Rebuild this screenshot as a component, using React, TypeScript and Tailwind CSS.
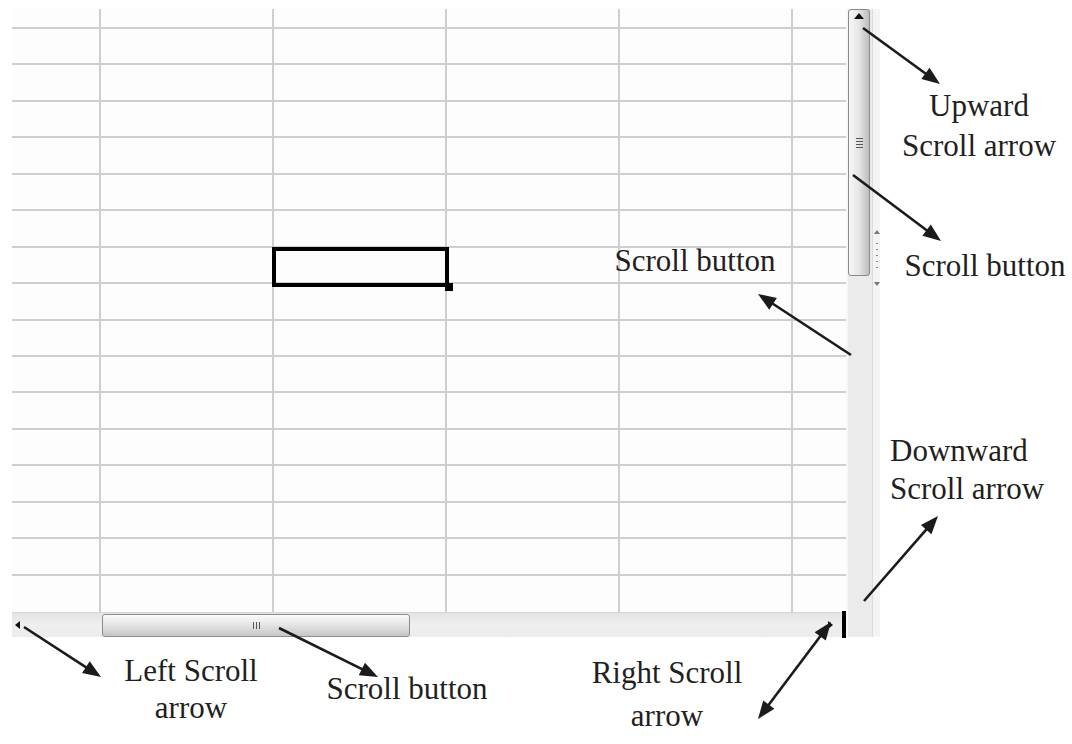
import React from "react";

type Arrow = { x1: number; y1: number; x2: number; y2: number; both?: boolean };

const arrows: Arrow[] = [
  { x1: 863, y1: 28, x2: 940, y2: 84 },
  { x1: 853, y1: 175, x2: 941, y2: 241 },
  { x1: 851, y1: 355, x2: 758, y2: 294 },
  { x1: 864, y1: 601, x2: 938, y2: 516 },
  { x1: 24, y1: 627, x2: 101, y2: 677 },
  { x1: 279, y1: 628, x2: 378, y2: 677 },
  { x1: 831, y1: 622, x2: 758, y2: 719, both: true },
];

const L = 18;
const W = 7;

function head(tx: number, ty: number, fx: number, fy: number) {
  const dx = tx - fx;
  const dy = ty - fy;
  const len = Math.hypot(dx, dy);
  const ux = dx / len;
  const uy = dy / len;
  const bx = tx - ux * L;
  const by = ty - uy * L;
  const nx = -uy;
  const ny = ux;
  return {
    pts: `${tx},${ty} ${bx + nx * W},${by + ny * W} ${bx - nx * W},${by - ny * W}`,
    bx: tx - ux * (L - 3),
    by: ty - uy * (L - 3),
  };
}

function ArrowsLayer() {
  return (
    <svg className="absolute inset-0 pointer-events-none" width={1072} height={744}>
      {arrows.map((a, i) => {
        const h2 = head(a.x2, a.y2, a.x1, a.y1);
        const h1 = a.both ? head(a.x1, a.y1, a.x2, a.y2) : null;
        return (
          <g key={i} fill="#1c1a1b" stroke="#1c1a1b">
            <line
              x1={h1 ? h1.bx : a.x1}
              y1={h1 ? h1.by : a.y1}
              x2={h2.bx}
              y2={h2.by}
              strokeWidth={2.6}
            />
            <polygon points={h2.pts} stroke="none" />
            {h1 && <polygon points={h1.pts} stroke="none" />}
          </g>
        );
      })}
    </svg>
  );
}

const colWidths = ["w-[89px]", "w-[173px]", "w-[173px]", "w-[173px]", "w-[173px]", "w-[53px]"];

function Grid() {
  const rows = Array.from({ length: 17 });
  return (
    <div className="grid grid-rows-[20px_repeat(16,1fr)] h-[603px] w-[834px] bg-[#fdfdfd]">
      {rows.map((_, r) => (
        <div key={r} className="flex">
          {colWidths.map((w, c) => (
            <div
              key={c}
              className={`${w} shrink-0 ${c < 5 ? "border-r-2" : ""} ${r < 16 ? "border-b-2" : ""} border-[#cfcfcf]`}
            />
          ))}
        </div>
      ))}
    </div>
  );
}

function HScroll() {
  return (
    <div className="relative h-[25px] w-[834px] bg-gradient-to-b from-[#e4e4e4] via-[#efefef] to-[#ececec] border-t border-[#d6d6d6] flex items-center">
      <div className="w-[90px] h-full flex items-center pl-[3px]">
        <svg width="6" height="8">
          <polygon points="0,4 5,0 5,8" fill="#111" />
        </svg>
      </div>
      <div className="w-[308px] h-[23px] rounded-[3px] border border-[#8e8e8e] bg-gradient-to-b from-[#fbfbfb] via-[#e3e3e3] to-[#c6c6c6] flex items-center justify-center">
        <div className="flex gap-[2px] h-[7px]">
          <div className="w-[1px] h-full bg-[#555]" />
          <div className="w-[1px] h-full bg-[#555]" />
          <div className="w-[1px] h-full bg-[#555]" />
        </div>
      </div>
      <div className="flex-1" />
      <div className="w-[8px] flex items-center">
        <svg width="6" height="8">
          <polygon points="6,4 1,0 1,8" fill="#111" />
        </svg>
      </div>
      <div className="w-[7px]" />
      <div className="w-[4px] h-[27px] bg-black -mt-[2px]" />
    </div>
  );
}

function VScroll() {
  return (
    <div className="w-[24px] h-[628px] flex flex-col bg-[#ebebeb]">
      <div className="h-[267px] w-[22px] rounded-[3px] border border-[#8a8a8a] bg-gradient-to-r from-[#f6f6f6] via-[#e6e6e6] to-[#bdbdbd] flex flex-col items-center">
        <svg width="10" height="6" className="mt-[3px]">
          <polygon points="5,0 10,6 0,6" fill="#111" />
        </svg>
        <div className="flex flex-col gap-[2px] w-[7px] mt-[119px]">
          <div className="h-[1px] w-full bg-[#555]" />
          <div className="h-[1px] w-full bg-[#555]" />
          <div className="h-[1px] w-full bg-[#555]" />
          <div className="h-[1px] w-full bg-[#555]" />
        </div>
      </div>
      <div className="flex-1" />
    </div>
  );
}

function SplitStrip() {
  return (
    <div className="w-[8px] h-[628px] bg-[#f4f4f4] border-l border-[#dcdcdc] flex flex-col items-center">
      <svg width="6" height="60" className="mt-[221px]">
        <polygon points="3,0 6,4 0,4" fill="#777" />
        <rect x="2" y="13" width="2" height="1" fill="#888" />
        <rect x="2" y="19" width="2" height="1" fill="#888" />
        <rect x="2" y="25" width="2" height="1" fill="#888" />
        <rect x="2" y="31" width="2" height="1" fill="#888" />
        <rect x="2" y="37" width="2" height="1" fill="#888" />
        <polygon points="3,56 6,52 0,52" fill="#777" />
      </svg>
    </div>
  );
}

const labelCls =
  "absolute text-[31px] text-[#231f20] whitespace-nowrap [font-family:'Liberation_Serif','Times_New_Roman',serif]";

export default function App() {
  return (
    <div className="relative w-[1072px] h-[744px] bg-white overflow-hidden">
      <div className="flex pt-[9px] pl-[12px]">
        <div className="flex flex-col">
          <Grid />
          <HScroll />
        </div>
        <div className="w-[2px] h-[628px] bg-[#f7f7f7]" />
        <VScroll />
        <SplitStrip />
      </div>

      {/* selected cell */}
      <div className="absolute left-[272px] top-[247px] w-[177px] h-[40px] border-[4px] border-black" />
      <div className="absolute left-[445px] top-[283px] w-[8px] h-[8px] bg-black" />

      <ArrowsLayer />

      <div className={`${labelCls} left-[889px] top-[86px] w-[180px] text-center leading-[40px]`}>
        Upward
        <br />
        Scroll arrow
      </div>
      <div className={`${labelCls} left-[895px] top-[246px] w-[180px] text-center leading-[40px]`}>
        Scroll button
      </div>
      <div className={`${labelCls} left-[605px] top-[241px] w-[180px] text-center leading-[40px]`}>
        Scroll button
      </div>
      <div className={`${labelCls} left-[890px] top-[432px] leading-[38px]`}>
        Downward
        <br />
        Scroll arrow
      </div>
      <div className={`${labelCls} left-[101px] top-[652px] w-[180px] text-center leading-[37px]`}>
        Left Scroll
        <br />
        arrow
      </div>
      <div className={`${labelCls} left-[317px] top-[669px] w-[180px] text-center leading-[40px]`}>
        Scroll button
      </div>
      <div className={`${labelCls} left-[577px] top-[651px] w-[180px] text-center leading-[43px]`}>
        Right Scroll
        <br />
        arrow
      </div>
    </div>
  );
}
